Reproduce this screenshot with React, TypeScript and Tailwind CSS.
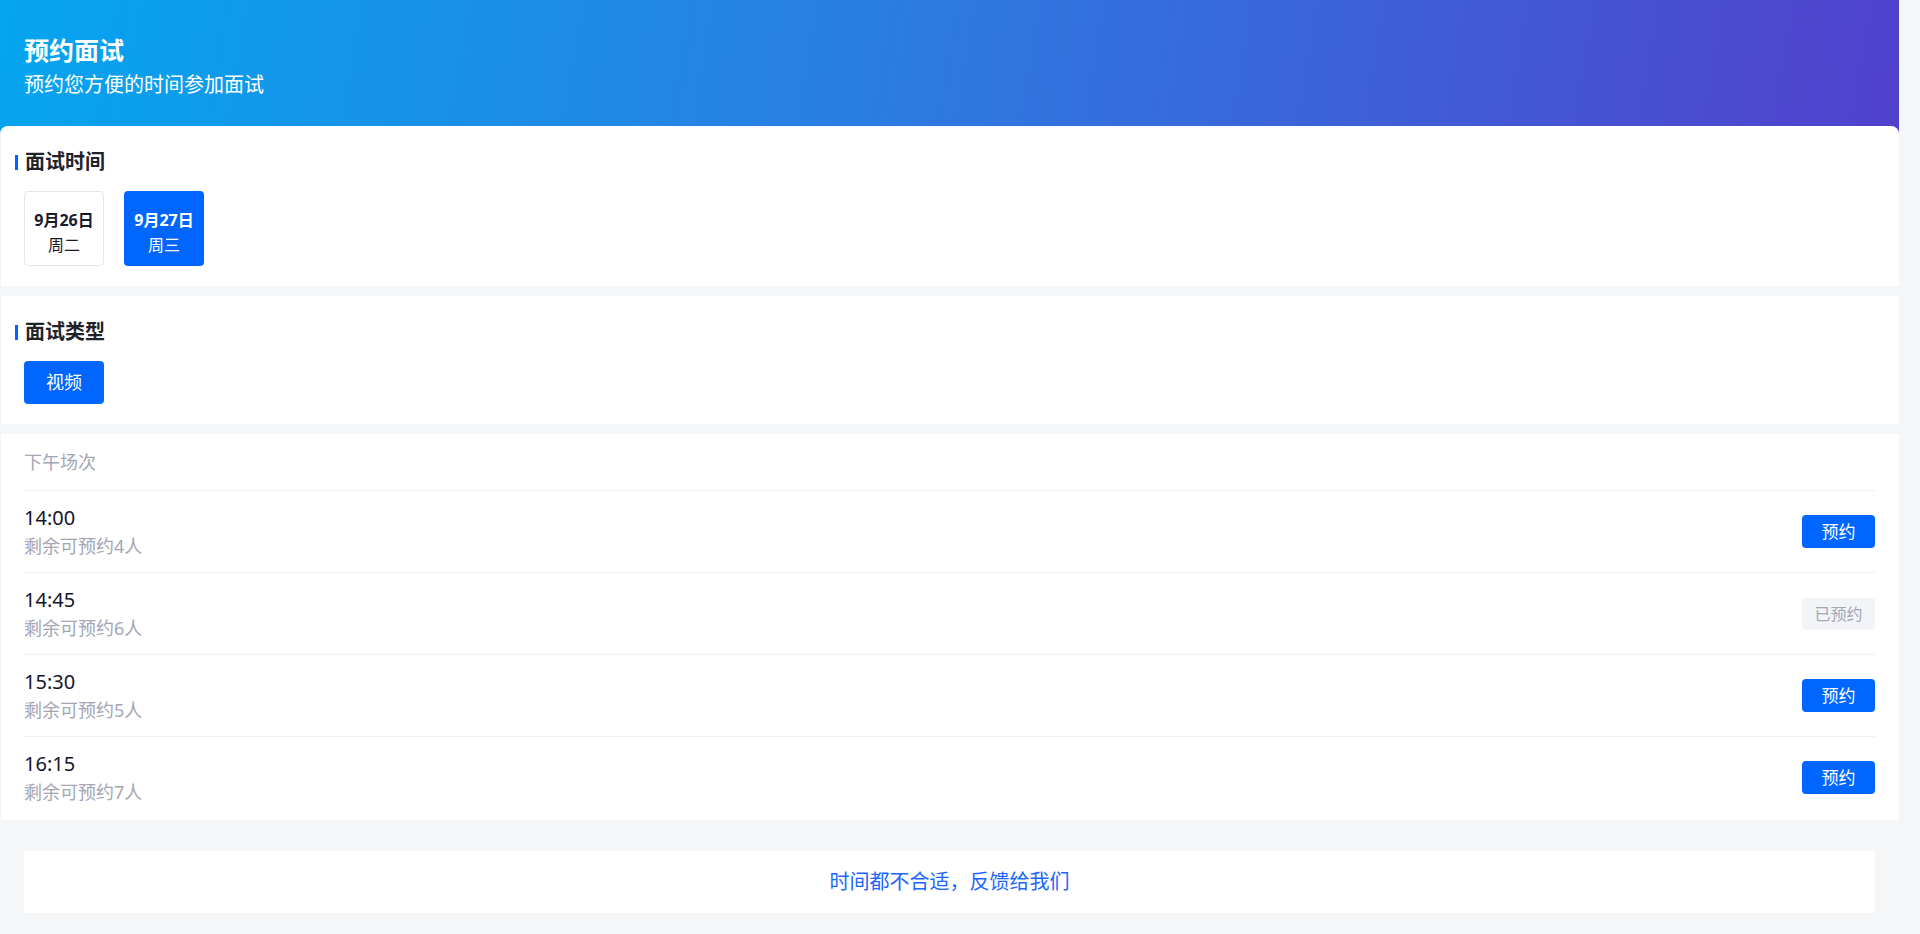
import React from 'react';

const dates = [
  { day: '9月26日', week: '周二', active: false },
  { day: '9月27日', week: '周三', active: true },
];

const slots = [
  { time: '14:00', left: 4, booked: false },
  { time: '14:45', left: 6, booked: true },
  { time: '15:30', left: 5, booked: false },
  { time: '16:15', left: 7, booked: false },
];

const SectionTitle: React.FC<{ text: string }> = ({ text }) => (
  <div className="flex items-center pl-[14px]">
    <span className="w-[3px] h-[15px] bg-[#0066ff] mr-[7px]" />
    <h2 className="text-[20px] leading-[28px] font-bold text-[#1f2329]">{text}</h2>
  </div>
);

export default function App() {
  return (
    <div
      className="min-h-screen bg-[#f5f6f8] pr-[21px] pb-[140px]"
      style={{ fontFamily: '"Noto Sans", "Noto Sans CJK SC", sans-serif' }}
    >
      {/* Header */}
      <header className="bg-[linear-gradient(100deg,#05a5f0_0%,#2a7ee2_45%,#5141cc_100%)] pl-[24px] pt-[33px] pb-[35px] text-white">
        <h1 className="text-[25px] leading-[34px] font-bold">预约面试</h1>
        <p className="mt-1 text-[20px] leading-[28px]">预约您方便的时间参加面试</p>
      </header>

      {/* Interview date */}
      <section className="relative -mt-2 bg-white rounded-t-lg border-l border-[#f3f4f6] pt-[22px] pb-5">
        <SectionTitle text="面试时间" />
        <div className="flex gap-5 pl-[23px] mt-[15px]">
          {dates.map((d) => (
            <div
              key={d.day}
              className={
                d.active
                  ? 'w-20 h-[75px] rounded-[4px] bg-[#0066ff] text-white flex flex-col items-center pt-[17px]'
                  : 'w-20 h-[75px] rounded-[4px] border border-[#e5e6eb] bg-white text-[#1a1a2e] flex flex-col items-center pt-[16px]'
              }
            >
              <span className="text-[16px] leading-[25px] font-bold">{d.day}</span>
              <span className="text-[16px] leading-[25px]">{d.week}</span>
            </div>
          ))}
        </div>
      </section>

      {/* Interview type */}
      <section className="mt-[10px] bg-white border-l border-[#f3f4f6] pt-[22px] pb-5">
        <SectionTitle text="面试类型" />
        <div className="pl-[23px] mt-[15px]">
          <button className="w-20 h-[43px] rounded-[4px] bg-[#0066ff] text-white text-[18px]">视频</button>
        </div>
      </section>

      {/* Slots */}
      <section className="mt-[10px] bg-white border-l border-[#f3f4f6] pl-[23px] pr-6 pb-[2px]">
        <div className="h-[56px] flex items-center text-[18px] text-[#a3a6b4]">下午场次</div>
        {slots.map((s) => (
          <div key={s.time} className="h-[82px] border-t border-[#f0f1f3] flex items-center justify-between">
            <div className="flex flex-col -mt-[1px]">
              <span className="text-[20px] leading-[29px] text-[#15152a]">{s.time}</span>
              <span className="text-[18px] leading-[26px] text-[#a3a6b4] mt-px">剩余可预约{s.left}人</span>
            </div>
            {s.booked ? (
              <span className="w-[73px] h-[32px] rounded-[4px] bg-[#f3f4f8] text-[#a3a6b4] text-[16px] flex items-center justify-center">
                已预约
              </span>
            ) : (
              <button className="w-[73px] h-[33px] rounded-[4px] bg-[#0066ff] text-white text-[17px] flex items-center justify-center">
                预约
              </button>
            )}
          </div>
        ))}
      </section>

      {/* Feedback */}
      <div className="px-6 pt-[31px]">
        <div className="h-[62px] bg-white flex items-center justify-center text-[20px] text-[#1a66ff]">
          时间都不合适，反馈给我们
        </div>
      </div>
    </div>
  );
}
